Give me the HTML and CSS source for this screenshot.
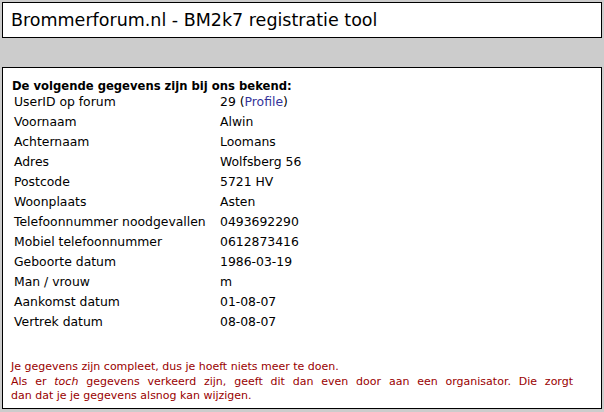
FILE: index.html
```html
<!DOCTYPE html>
<html lang="nl">
<head>
  <meta charset="UTF-8" />
  <title>Brommerforum.nl - BM2k7 registratie tool</title>
  <link rel="stylesheet" href="styles.css">
</head>
<body>

  <!-- Kop -->
  <div class="header">Brommerforum.nl - BM2k7 registratie tool</div>

  <!-- Gegevens -->
  <div class="content">
    <h2>De volgende gegevens zijn bij ons bekend:</h2>
    <table class="details">
      <tr><td>UserID op forum</td><td>29 (<a href="#">Profile</a>)</td></tr>
      <tr><td>Voornaam</td><td>Alwin</td></tr>
      <tr><td>Achternaam</td><td>Loomans</td></tr>
      <tr><td>Adres</td><td>Wolfsberg 56</td></tr>
      <tr><td>Postcode</td><td>5721 HV</td></tr>
      <tr><td>Woonplaats</td><td>Asten</td></tr>
      <tr><td>Telefoonnummer noodgevallen</td><td>0493692290</td></tr>
      <tr><td>Mobiel telefoonnummer</td><td>0612873416</td></tr>
      <tr><td>Geboorte datum</td><td>1986-03-19</td></tr>
      <tr><td>Man / vrouw</td><td>m</td></tr>
      <tr><td>Aankomst datum</td><td>01-08-07</td></tr>
      <tr><td>Vertrek datum</td><td>08-08-07</td></tr>
    </table>

    <p class="notice">
      Je gegevens zijn compleet, dus je hoeft niets meer te doen.<br>
      <span class="justified">Als er <em>toch</em> gegevens verkeerd zijn, geeft dit dan even door aan een organisator. Die zorgt</span>
      dan dat je je gegevens alsnog kan wijzigen.
    </p>
  </div>

</body>
</html>
```

FILE: styles.css
```css
* {
  margin: 0; padding: 0; box-sizing: border-box;
}
body {
  font-family: "DejaVu Sans", Verdana, sans-serif;
  background: #cccccc;
  color: #000;
  padding: 2px 2px 0 2px;
}
.header {
  background: #fff;
  border: 1px solid #000;
  height: 36px;
  padding: 0 8px;
  font-size: 17.5px;
  line-height: 34px;
}
.content {
  background: #fff;
  border: 1px solid #000;
  margin-top: 29px;
  height: 342px;
  padding: 10px 9px 0 8px;
}
.content h2 {
  font-size: 11.6px;
  font-weight: bold;
  line-height: 14px;
  margin-left: 1px;
  margin-top: 1px;
}
.details {
  border-collapse: separate;
  border-spacing: 2px;
  margin-top: -3px;
  font-size: 12.4px;
}
.details td {
  height: 18px;
  padding: 0 1px;
  white-space: nowrap;
}
.details td:first-child {
  width: 204px;
}
.details a {
  color: #333399;
  text-decoration: none;
}
.notice {
  width: 562px;
  margin-top: 28px;
  font-size: 11px;
  line-height: 14.5px;
  color: #990000;
}
.notice .justified {
  display: block;
  text-align: justify;
  text-align-last: justify;
}
```
